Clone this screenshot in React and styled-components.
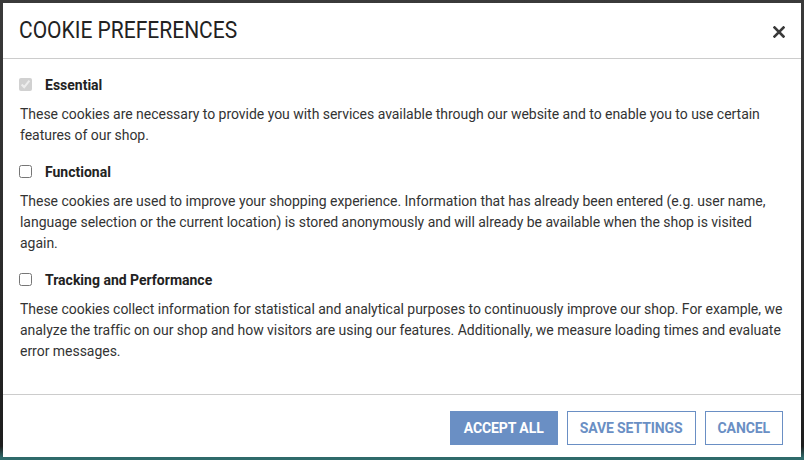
import React from "react";
import styled, { createGlobalStyle } from "styled-components";

const GlobalStyle = createGlobalStyle`
  html, body {
    margin: 0;
    padding: 0;
    background: linear-gradient(180deg, #3a3a3a 0%, #2a2a2a 60%, #1d1d1d 97%, #2f6b6b 99.5%);
  }
  body {
    font-family: Roboto, "Liberation Sans", sans-serif;
    width: 804px;
    height: 460px;
    overflow: hidden;
  }
`;

const sections = [
  {
    id: "essential",
    title: "Essential",
    checked: true,
    disabled: true,
    text:
      "These cookies are necessary to provide you with services available through our website and to enable you to use certain features of our shop.",
  },
  {
    id: "functional",
    title: "Functional",
    text:
      "These cookies are used to improve your shopping experience. Information that has already been entered (e.g. user name, language selection or the current location) is stored anonymously and will already be available when the shop is visited again.",
  },
  {
    id: "tracking",
    title: "Tracking and Performance",
    text:
      "These cookies collect information for statistical and analytical purposes to continuously improve our shop. For example, we analyze the traffic on our shop and how visitors are using our features. Additionally, we measure loading times and evaluate error messages.",
  },
];

const App = () => {
  return (
    <>
      <GlobalStyle />
      <Backdrop>
        <Modal>
          <Header>
            <Title>COOKIE PREFERENCES</Title>
            <CloseButton aria-label="Close">
              <svg width="12" height="12" viewBox="0 0 12 12">
                <path
                  d="M1.5 1.5 L10.5 10.5 M10.5 1.5 L1.5 10.5"
                  stroke="#3a3a3a"
                  strokeWidth="2.6"
                  strokeLinecap="square"
                />
              </svg>
            </CloseButton>
          </Header>
          <Body>
            {sections.map(({ id, title, text, checked, disabled }) => (
              <Section key={id}>
                <Label htmlFor={id}>
                  <Checkbox
                    type="checkbox"
                    id={id}
                    defaultChecked={checked}
                    disabled={disabled}
                  />
                  {title}
                </Label>
                <Description>{text}</Description>
              </Section>
            ))}
          </Body>
          <Footer>
            <Button primary>Accept all</Button>
            <Button>Save settings</Button>
            <Button>Cancel</Button>
          </Footer>
        </Modal>
      </Backdrop>
    </>
  );
};

const Backdrop = styled.div`
  padding: 3px;
  height: 460px;
  box-sizing: border-box;
`;

const Modal = styled.div`
  width: 798px;
  height: 454px;
  background-color: #fff;
  display: flex;
  flex-direction: column;
  color: #333;
`;

const Header = styled.header`
  height: 55px;
  border-bottom: 1px solid #ccc;
  display: flex;
  align-items: center;
  justify-content: space-between;
  padding: 0 16px 0 16px;
`;

const Title = styled.h1`
  margin: 0 0 2px 0;
  font-family: Roboto, "Liberation Sans", sans-serif;
  font-weight: 400;
  font-size: 24px;
  color: #222;
  transform: scaleX(0.875);
  transform-origin: left center;
  white-space: nowrap;
`;

const CloseButton = styled.button`
  border: none;
  background: none;
  padding: 0;
  margin-top: 2px;
  width: 12px;
  height: 12px;
  display: flex;
  cursor: pointer;
`;

const Body = styled.div`
  flex: 1;
  padding: 15px 12px 0 16px;
  border-bottom: 1px solid #ccc;
`;

const Section = styled.section`
  margin-bottom: 15px;
`;

const Label = styled.label`
  display: flex;
  align-items: center;
  height: 21px;
  font-size: 14px;
  font-weight: 700;
  color: #222;
`;

const Checkbox = styled.input`
  margin: 0 13px 0 0;
  width: 13px;
  height: 13px;
`;

const Description = styled.p`
  margin: 9px 0 0 1px;
  font-size: 14px;
  line-height: 21px;
  letter-spacing: -0.03px;
  color: #333;
`;

const Footer = styled.footer`
  display: flex;
  justify-content: flex-end;
  gap: 9px;
  padding: 16px 18px 12px 0;
`;

const Button = styled.button`
  height: 34px;
  padding: 0 ${(p) => (p.primary ? "13px" : "12px")};
  font-family: Roboto, "Liberation Sans", sans-serif;
  font-size: 14px;
  font-weight: 700;
  text-transform: uppercase;
  letter-spacing: -0.1px;
  border: 1px solid #6a8fc4;
  background-color: ${(p) => (p.primary ? "#6a8fc4" : "#fff")};
  color: ${(p) => (p.primary ? "#fff" : "#6a8fc4")};
  cursor: pointer;
`;

export default App;
